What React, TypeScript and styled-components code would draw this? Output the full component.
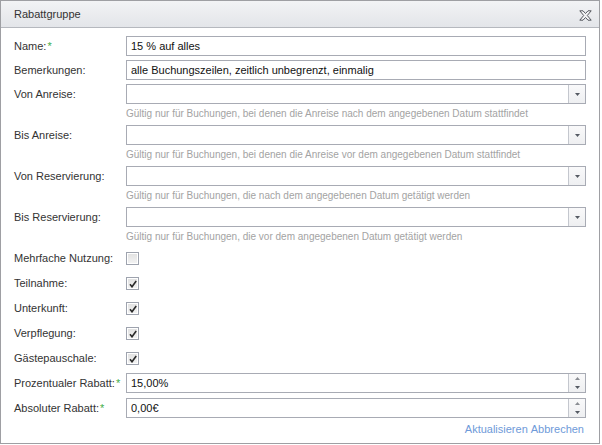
import React from 'react'
import styled, { createGlobalStyle } from 'styled-components'

const GlobalStyle = createGlobalStyle`
    html, body {
        margin: 0;
        padding: 0;
        background: #ffffff;
        font-family: "Liberation Sans", Arial, sans-serif;
    }
`

const Window = styled.div`
    width: 600px;
    height: 444px;
    box-sizing: border-box;
    border: 1px solid #9e9fa3;
    background: #ffffff;
    display: flex;
    flex-direction: column;
`

const Header = styled.div`
    height: 26px;
    border-bottom: 1px solid #b5b8be;
    background: linear-gradient(#f2f3f5, #e3e5e9);
    display: flex;
    align-items: center;
    justify-content: space-between;
    padding: 0 7px 0 13px;
`

const Title = styled.div`
    font-size: 11px;
    color: #333333;
`

const CloseButton = styled.div`
    width: 14px;
    height: 12px;
    margin-top: 2px;
    display: flex;
    align-items: center;
    justify-content: center;
    cursor: pointer;
`

const Body = styled.div`
    padding: 8px 13px 0 13px;
    display: flex;
    flex-direction: column;
`

interface RowProps {
    $space?: number
}

const Row = styled.div<RowProps>`
    display: grid;
    grid-template-columns: 112px 1fr;
    align-items: start;
    margin-bottom: ${ props => props.$space ?? 4 }px;
`

const Label = styled.div`
    font-size: 11px;
    line-height: 20px;
    color: #333333;
    white-space: nowrap;
`

const Required = styled.span`
    color: #3fae49;
    margin-left: 1px;
`

const Field = styled.div`
    display: flex;
    flex-direction: column;
`

const TextInput = styled.input`
    height: 20px;
    box-sizing: border-box;
    width: 100%;
    border: 1px solid #a8abb4;
    padding: 0 4px;
    margin: 0;
    font-family: "Liberation Sans", Arial, sans-serif;
    font-size: 11px;
    color: #111111;
    background: #ffffff;
    outline: none;
`

const Combo = styled.div`
    height: 20px;
    box-sizing: border-box;
    border: 1px solid #a8abb4;
    display: flex;
    background: #ffffff;
`

const ComboText = styled.input`
    flex: 1;
    min-width: 0;
    border: none;
    margin: 0;
    padding: 0 4px;
    font-family: "Liberation Sans", Arial, sans-serif;
    font-size: 11px;
    color: #111111;
    outline: none;
    background: transparent;
`

const SideButton = styled.div`
    width: 16px;
    border-left: 1px solid #c4c7ce;
    background: linear-gradient(#f9f9fa, #eeeff1);
    display: flex;
    flex-direction: column;
    align-items: center;
    justify-content: center;
`

const SpinHalf = styled.div`
    flex: 1;
    display: flex;
    align-items: center;
    justify-content: center;
`

const Hint = styled.div`
    margin-top: 2px;
    font-size: 10px;
    line-height: 15px;
    color: #a3a3a3;
    white-space: nowrap;
`

const CheckBox = styled.div`
    width: 13px;
    height: 13px;
    margin-top: 4px;
    box-sizing: border-box;
    border: 1px solid #9ea3ae;
    padding: 1px;
    background: #ffffff;
`

const CheckInner = styled.div`
    width: 100%;
    height: 100%;
    background: linear-gradient(#e2e2e2, #f2f2f2);
    display: flex;
    align-items: center;
    justify-content: center;
`

const Footer = styled.div`
    display: flex;
    justify-content: flex-end;
    gap: 3px;
    margin-top: 4px;
    padding-right: 2px;
`

const LinkButton = styled.span`
    font-size: 11px;
    line-height: 14px;
    color: #6e9ad9;
    cursor: pointer;
`

const Triangle = ({ up }: { up?: boolean }) => (
    <svg width="5" height="3" viewBox="0 0 5 3">
        <path d={ up ? 'M0 3 L2.5 0 L5 3 Z' : 'M0 0 L5 0 L2.5 3 Z' } fill={ up ? '#8a8d93' : '#555a63' } />
    </svg>
)

const CloseIcon = () => (
    <svg width="13" height="11" viewBox="0 0 13 11">
        <path
            d="M0.8 0.8 L4 0.8 L6.5 3.5 L9 0.8 L12.2 0.8 L8.3 5.5 L12.2 10.2 L9 10.2 L6.5 7.5 L4 10.2 L0.8 10.2 L4.7 5.5 Z"
            fill="#f4f4f6"
            stroke="#55585f"
            strokeWidth="1"
            strokeLinejoin="miter"
        />
    </svg>
)

const CheckMark = () => (
    <svg width="8" height="8" viewBox="0 0 8 8">
        <path d="M1 4.3 L3 6.8 L7.2 1" fill="none" stroke="#2b2b2b" strokeWidth="1.6" />
    </svg>
)

const selectRows = [
    { label: 'Von Anreise:', hint: 'Gültig nur für Buchungen, bei denen die Anreise nach dem angegebenen Datum stattfindet' },
    { label: 'Bis Anreise:', hint: 'Gültig nur für Buchungen, bei denen die Anreise vor dem angegebenen Datum stattfindet' },
    { label: 'Von Reservierung:', hint: 'Gültig nur für Buchungen, die nach dem angegebenen Datum getätigt werden' },
    { label: 'Bis Reservierung:', hint: 'Gültig nur für Buchungen, die vor dem angegebenen Datum getätigt werden' },
]

const checkRows = [
    { label: 'Mehrfache Nutzung:', checked: false },
    { label: 'Teilnahme:', checked: true },
    { label: 'Unterkunft:', checked: true },
    { label: 'Verpflegung:', checked: true },
    { label: 'Gästepauschale:', checked: true },
]

const App: React.FC = () => {
    return (
        <>
            <GlobalStyle />
            <Window>
                <Header>
                    <Title>Rabattgruppe</Title>
                    <CloseButton><CloseIcon /></CloseButton>
                </Header>

                <Body>
                    <Row>
                        <Label>Name:<Required>*</Required></Label>
                        <TextInput readOnly value="15 % auf alles" />
                    </Row>
                    <Row>
                        <Label>Bemerkungen:</Label>
                        <TextInput readOnly value="alle Buchungszeilen, zeitlich unbegrenzt, einmalig" />
                    </Row>

                    {
                        selectRows.map((row, index) =>
                            <Row key={ index }>
                                <Label>{ row.label }</Label>
                                <Field>
                                    <Combo>
                                        <ComboText readOnly value="" />
                                        <SideButton><Triangle /></SideButton>
                                    </Combo>
                                    <Hint>{ row.hint }</Hint>
                                </Field>
                            </Row>
                        )
                    }

                    {
                        checkRows.map((row, index) =>
                            <Row key={ index } $space={ 5 }>
                                <Label>{ row.label }</Label>
                                <CheckBox>
                                    <CheckInner>{ row.checked && <CheckMark /> }</CheckInner>
                                </CheckBox>
                            </Row>
                        )
                    }

                    <Row $space={ 5 }>
                        <Label>Prozentualer Rabatt:<Required>*</Required></Label>
                        <Combo>
                            <ComboText readOnly value="15,00%" />
                            <SideButton>
                                <SpinHalf><Triangle up /></SpinHalf>
                                <SpinHalf><Triangle /></SpinHalf>
                            </SideButton>
                        </Combo>
                    </Row>
                    <Row $space={ 0 }>
                        <Label>Absoluter Rabatt:<Required>*</Required></Label>
                        <Combo>
                            <ComboText readOnly value="0,00€" />
                            <SideButton>
                                <SpinHalf><Triangle up /></SpinHalf>
                                <SpinHalf><Triangle /></SpinHalf>
                            </SideButton>
                        </Combo>
                    </Row>

                    <Footer>
                        <LinkButton>Aktualisieren</LinkButton>
                        <LinkButton>Abbrechen</LinkButton>
                    </Footer>
                </Body>
            </Window>
        </>
    )
}

export default App
